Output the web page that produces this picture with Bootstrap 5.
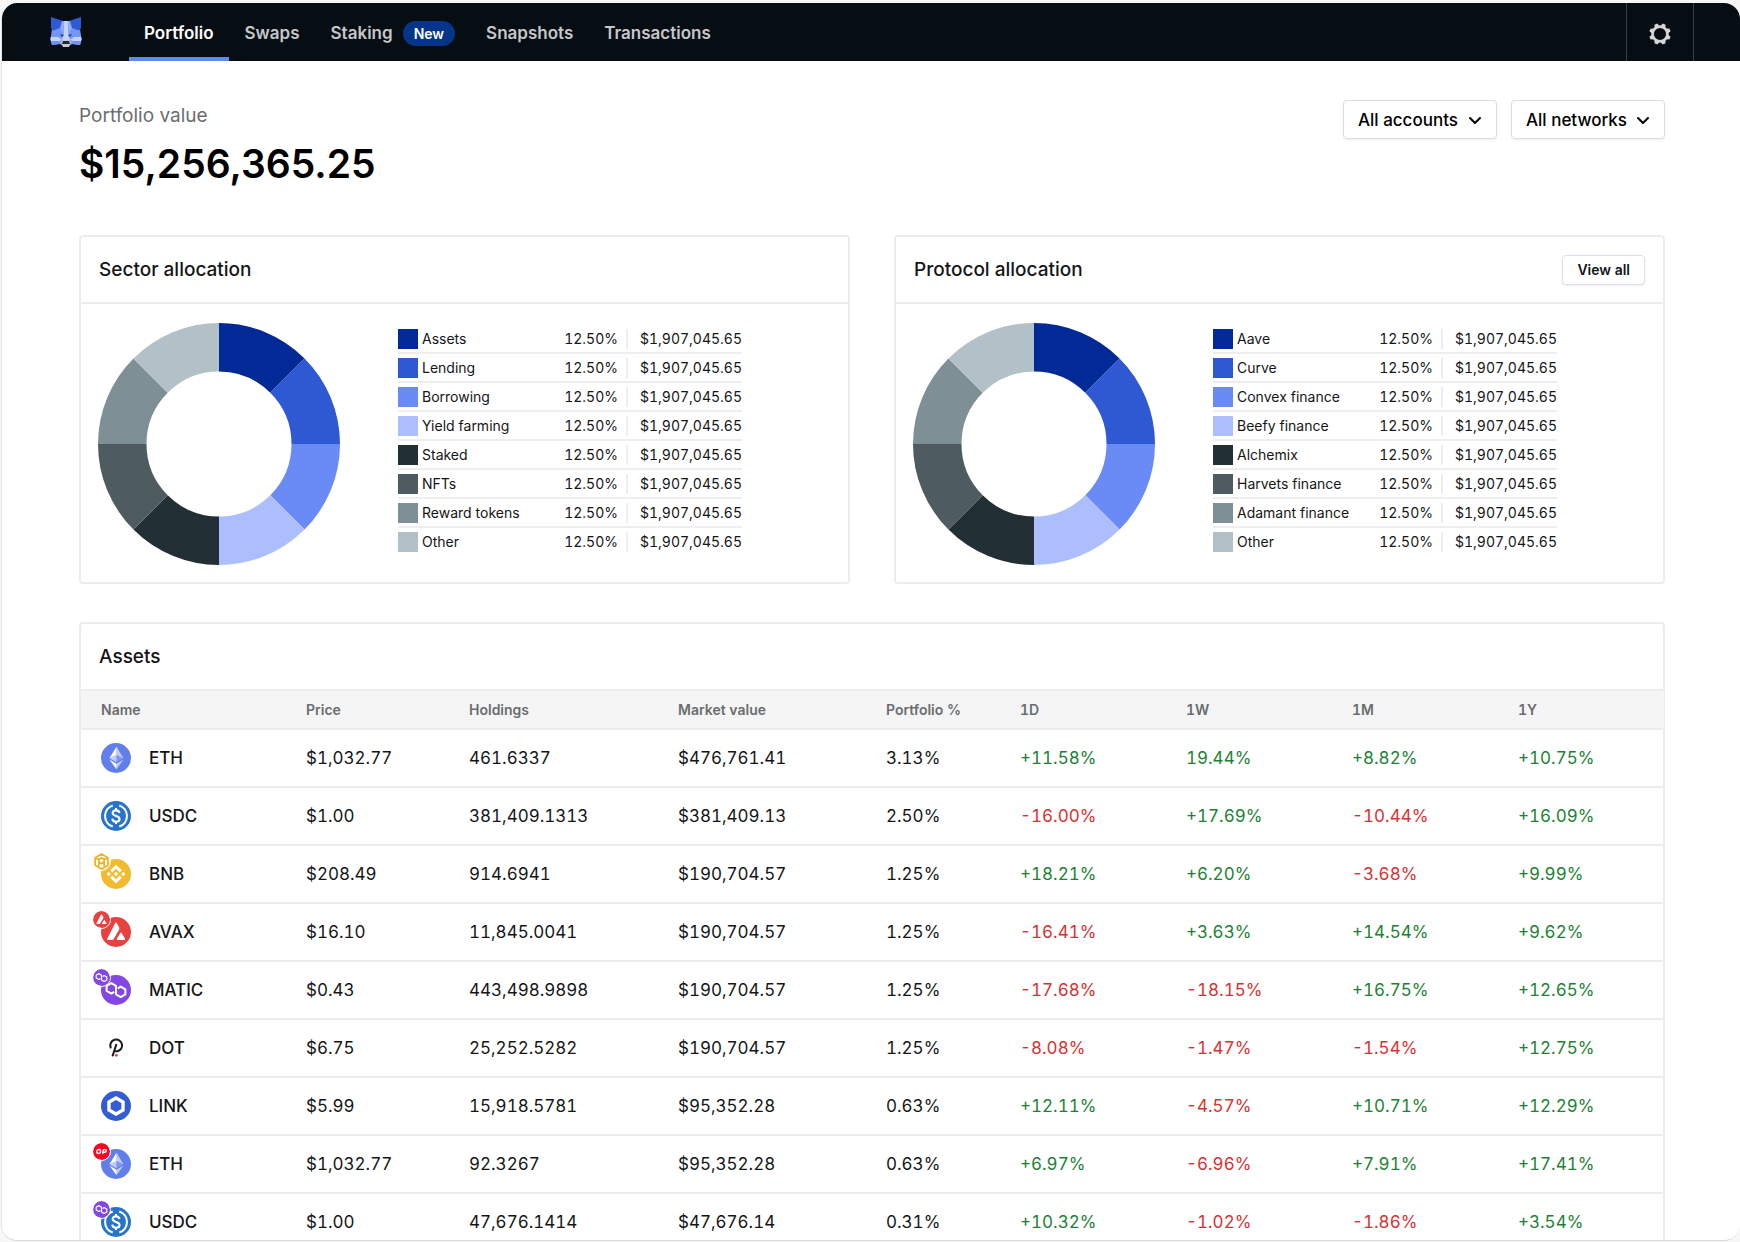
<!DOCTYPE html>
<html lang="en">
<head>
<meta charset="utf-8">
<meta name="viewport" content="width=device-width, initial-scale=1">
<title>Portfolio</title>
<link href="https://cdn.jsdelivr.net/npm/bootstrap@5.3.0/dist/css/bootstrap.min.css" rel="stylesheet">
<style>
  :root { --line: #ececec; --ink: #141618; --up: #1c8234; --down: #d73232; }
  body { font-family: Inter, "Liberation Sans", sans-serif; color: var(--ink); background: #f7f7f7; height: 100vh; padding: 3px 0 1px 1px; overflow: hidden; }
  .app-shell { height: 100%; background: #fff; border-left: 1px solid #e4e4e4; border-bottom: 1px solid #d8d8d8; border-radius: 16px; overflow-x: hidden; overflow-y: auto; scrollbar-width: none; }
  .topbar { --bs-navbar-padding-y: 0; height: 58px; background: #060d13; padding-left: 48px; }
  .topbar .topbar-links .nav-link { color: #c5c7c9; font-weight: 600; font-size: 17px; line-height: 24px; height: 58px; padding: 18px 15px 12px; border-bottom: 4px solid transparent; }
  .topbar .topbar-links .nav-link.active { color: #fff; border-bottom-color: #5a8bf5; }
  .new-pill { background: #043589; font-size: 14px; font-weight: 600; line-height: 25px; padding: 0 11px; margin-left: 10px; }
  .topbar-links { margin-left: 47px; gap: 1px; }
  .gear-btn { width: 68px; height: 58px; margin-right: 46px; border: solid #3b4045; border-width: 0 1px; border-radius: 0; color: #d6d6d6; }
  .page-body { padding: 39px 75px 0 77px; }
  .value-label { font-size: 19px; line-height: 32px; color: #6a6d70; }
  .value-total { font-size: 39px; line-height: 48px; font-weight: 600; color: #000; margin: 8px 0 0; }
  .filters { gap: 14px; }
  .filter-select { width: 154px; height: 39px; font-size: 17px; font-weight: 500; line-height: 24px; color: #000; border-color: #d9dee4; border-radius: 4px; padding: 0 30px 0 14px; background-position: right 14px center; background-size: 14px 14px; box-shadow: 0 1px 2px rgba(20,40,60,.08);
    --bs-form-select-bg-img: url("data:image/svg+xml,%3csvg xmlns='http://www.w3.org/2000/svg' viewBox='0 0 14 14'%3e%3cpath fill='none' stroke='%23000' stroke-width='2' stroke-linecap='round' stroke-linejoin='round' d='M2 5l5 5 5-5'/%3e%3c/svg%3e"); }
  .panel { --bs-card-border-color: var(--line); --bs-card-border-radius: 4px; --bs-card-inner-border-radius: 3px; border-width: 2px; color: var(--ink); }
  .panel-head { height: 67px; padding: 0 18px; border-bottom: 2px solid var(--line); }
  .panel-title { font-size: 19px; line-height: 26px; font-weight: 500; margin: 0; }
  .view-btn { font-size: 14px; font-weight: 600; line-height: 20px; padding: 4px 14px; border: 1px solid #dbe1e8; border-radius: 4px; color: var(--ink); background: #fff; box-shadow: 0 1px 2px rgba(20,40,60,.08); }
  .panel-split { --bs-gutter-x: 44px; margin-top: 47px; margin-bottom: 38px; }
  .alloc-body { padding: 19px 17px 17px; gap: 58px; }
  .donut { width: 242px; height: 242px; flex: none; }
  .legend-list { width: 344px; margin-top: 2px; font-size: 14px; line-height: 20px; }
  .legend-list li { height: 29px; padding-top: 4px; border-bottom: 2px solid #eee; }
  .legend-list li:last-child { border-bottom: 0; }
  .swatch { width: 20px; height: 20px; margin-right: 4px; }
  .leg-pct, .leg-val { font-variant-numeric: tabular-nums; }
  .leg-pct { height: 20px; padding-right: 8px; border-right: 2px solid #eee; }
  .leg-val { width: 114px; text-align: right; }
  .c1{fill:#012a96;background:#012a96}.c2{fill:#2f58d3;background:#2f58d3}.c3{fill:#6a8bf5;background:#6a8bf5}.c4{fill:#adbeff;background:#adbeff}
  .c5{fill:#223035;background:#223035}.c6{fill:#4e5c61;background:#4e5c61}.c7{fill:#7e8f95;background:#7e8f95}.c8{fill:#b1c1c7;background:#b1c1c7}
  .assets-table { table-layout: fixed; margin: 0; font-size: 17px; line-height: 24px; font-variant-numeric: tabular-nums; --bs-table-color: var(--ink); --bs-table-bg: transparent; }
  .assets-table > :not(caption) > * > * { padding: 0 0 0 20px; border-color: var(--line); border-bottom-width: 2px; vertical-align: middle; }
  .assets-table thead th { height: 38px; font-size: 14px; font-weight: 600; color: #6a6d70; background: #f5f5f5; }
  .assets-table tbody > tr > * { height: 58px; }
  .assets-table tbody th { font-weight: 500; }
  .w-name{width:205px}.w-price{width:163px}.w-hold{width:209px}.w-mkt{width:208px}.w-pct{width:134px}.w-chg{width:166px}
  .up { color: var(--up) !important; } .down { color: var(--down) !important; }
  .coin { width: 30px; height: 30px; margin-right: 18px; }
  .coin svg { display: block; }
  .coin .chain { position: absolute; left: -9px; top: -7px; border: 1px solid #fff; border-radius: 50%; box-sizing: content-box; }
</style>
<script src="https://cdn.jsdelivr.net/npm/bootstrap@5.3.0/dist/js/bootstrap.bundle.min.js"></script>
</head>
<body>
<svg width="0" height="0" class="position-absolute" aria-hidden="true">
  <symbol id="eth" viewBox="0 0 32 32"><circle cx="16" cy="16" r="16" fill="#627eea"/><path fill="#fff" fill-opacity=".6" d="M16.500 4v8.900l7.500 3.300z"/><path fill="#fff" d="M16.500 4L9 16.200l7.500-3.300z"/><path fill="#fff" fill-opacity=".6" d="M16.500 22v6L24 17.600z"/><path fill="#fff" d="M16.500 28v-6L9 17.600z"/><path fill="#fff" fill-opacity=".2" d="M16.500 20.600l7.500-4.400-7.500-3.300z"/><path fill="#fff" fill-opacity=".6" d="M9 16.200l7.500 4.400v-7.700z"/></symbol>
  <symbol id="usdc" viewBox="0 0 32 32"><circle cx="16" cy="16" r="16" fill="#2775ca"/><g fill="none" stroke="#fff" stroke-width="2.200"><path d="M12.500 4.700a11.900 11.900 0 0 0 0 22.600M19.500 4.700a11.900 11.900 0 0 1 0 22.600"/><path d="M19.700 13c-.2-2-1.600-3-3.700-3-2.200 0-3.600 1.100-3.600 2.900 0 4 7.400 2.100 7.400 6.200 0 1.900-1.500 3-3.800 3-2.300 0-3.800-1.100-4-3.200M16 7.500V10M16 22v2.500"/></g></symbol>
  <symbol id="bnb" viewBox="0 0 32 32"><circle cx="16" cy="16" r="16" fill="#f3ba2f"/><path fill="#fff" d="M12.100 14.400L16 10.500l3.900 3.900 2.300-2.300L16 6l-6.200 6.100zM6 16l2.300-2.300 2.200 2.300-2.200 2.300zm6.100 1.600L16 21.500l3.900-3.900 2.300 2.300L16 26l-6.200-6.100zM21.500 16l2.200-2.300L26 16l-2.300 2.300zm-3.200 0L16 13.700 13.700 16l2.300 2.300z"/></symbol>
  <symbol id="bsc" viewBox="0 0 32 32"><circle cx="16" cy="16" r="16" fill="#fff"/><g fill="none" stroke="#f0b323" stroke-width="3.400" stroke-linejoin="round"><path d="M16 2l12 7v14l-12 7-12-7V9z"/><path d="M5 10l6 2 5-3 5 3 6-2M11 12v5l5 3 5-3v-5M11 17v8M21 17v8"/></g></symbol>
  <symbol id="avax" viewBox="0 0 32 32"><circle cx="16" cy="16" r="16" fill="#e84142"/><path fill="#fff" d="M15.200 6.500q.8-1.200 1.600 0l2.500 4.400q.7 1.300 0 2.600l-5.600 9.600q-.8 1.400-2.400 1.400H7.500q-1.700 0-.9-1.400zM20.500 17.300q.8-1.300 1.600 0l3.600 6q.6 1.200-.8 1.200h-7.200q-1.400 0-.8-1.200z"/></symbol>
  <symbol id="matic" viewBox="0 0 32 32"><circle cx="16" cy="16" r="16" fill="#8247e5"/><path fill="none" stroke="#fff" stroke-width="2.200" stroke-linejoin="round" d="M14 18l-3 1.800-5-2.900v-5.300l5-2.900 5 2.900v9l5 2.900 5-2.900v-5.300l-5-2.900-3 1.800"/></symbol>
  <symbol id="dot" viewBox="0 0 32 32"><path fill="none" stroke="#1e1e1e" stroke-width="2.200" stroke-linecap="round" d="M10.300 15.500A6.300 6.300 0 1 1 17 19.500h-2.300M16.200 12.500L12.500 24"/><circle cx="16.300" cy="23.800" r="1.500" fill="#e6443d"/></symbol>
  <symbol id="link" viewBox="0 0 32 32"><circle cx="16" cy="16" r="16" fill="#335dd2"/><path fill="none" stroke="#fff" stroke-width="3.600" d="M16 7.500l7.500 4.300v8.400L16 24.500l-7.500-4.300v-8.400z"/></symbol>
  <symbol id="op" viewBox="0 0 32 32"><circle cx="16" cy="16" r="16" fill="#ff0420"/><g fill="none" stroke="#fff" stroke-width="2.600"><ellipse cx="11" cy="16" rx="3.600" ry="3.800" transform="skewX(-8) translate(2 0)"/><path d="M18 21l1.700-8.500h3.300c3 0 2.600 5-1 5h-3"/></g></symbol>
  <symbol id="donut" viewBox="-121 -121 242 242">
    <path class="c1" d="M0-121A121 121 0 0 1 85.560-85.560L51.270-51.270A72.500 72.500 0 0 0 0-72.500z"/>
    <path class="c2" d="M0-121A121 121 0 0 1 85.560-85.560L51.270-51.270A72.500 72.500 0 0 0 0-72.500z" transform="rotate(45)"/>
    <path class="c3" d="M0-121A121 121 0 0 1 85.560-85.560L51.270-51.270A72.500 72.500 0 0 0 0-72.500z" transform="rotate(90)"/>
    <path class="c4" d="M0-121A121 121 0 0 1 85.560-85.560L51.270-51.270A72.500 72.500 0 0 0 0-72.500z" transform="rotate(135)"/>
    <path class="c5" d="M0-121A121 121 0 0 1 85.560-85.560L51.270-51.270A72.500 72.500 0 0 0 0-72.500z" transform="rotate(180)"/>
    <path class="c6" d="M0-121A121 121 0 0 1 85.560-85.560L51.270-51.270A72.500 72.500 0 0 0 0-72.500z" transform="rotate(225)"/>
    <path class="c7" d="M0-121A121 121 0 0 1 85.560-85.560L51.270-51.270A72.500 72.500 0 0 0 0-72.500z" transform="rotate(270)"/>
    <path class="c8" d="M0-121A121 121 0 0 1 85.560-85.560L51.270-51.270A72.500 72.500 0 0 0 0-72.500z" transform="rotate(315)"/>
  </symbol>
</svg>

<div class="app-shell">
  <nav class="navbar navbar-expand topbar" aria-label="Main">
    <a href="#" class="d-flex" aria-label="Home">
      <svg width="32" height="30" viewBox="0 0 32 30">
        <path fill="#7f9ff8" d="M2 12l9-8h10l9 8 1 7 1 3-2 6-8-1-3 2h-6l-3-2-8 1-2-6 1-3z"/>
        <path fill="#3059d4" d="M1 0l12 4-2 7-7 4-3-4zM31 0L19 4l2 7 7 4 3-4z"/>
        <path fill="#7395f5" d="M2 14l8-3 3 8-3 2-8-1zM30 14l-8-3-3 8 3 2 8-1z"/>
        <path fill="#8daafb" d="M12 4h2v12l-4-5zM20 4h-2v12l4-5z"/>
        <path fill="#c3d2ff" d="M14 4h4v12l2 7h-8l2-7zM1 20h7l4 3-3 1H1zM31 20h-7l-4 3 3 1h8z"/>
        <path fill="#6f90f5" d="M1 24h8l1 3-8 1zM31 24h-8l-1 3 8 1z"/>
        <path fill="#1f3a8e" d="M10 17l4 1-2 2zM22 17l-4 1 2 2z"/>
        <path fill="#c9c9c9" d="M11 25l2-2h6l2 2-2 5h-6z"/><path fill="#24272a" d="M13 24h6l1 3h-8z"/>
      </svg>
    </a>
    <ul class="navbar-nav topbar-links">
      <li class="nav-item"><a class="nav-link active" aria-current="page" href="#">Portfolio</a></li>
      <li class="nav-item"><a class="nav-link" href="#">Swaps</a></li>
      <li class="nav-item"><a class="nav-link d-flex align-items-center" href="#">Staking<span class="badge rounded-pill new-pill">New</span></a></li>
      <li class="nav-item"><a class="nav-link" href="#">Snapshots</a></li>
      <li class="nav-item"><a class="nav-link" href="#">Transactions</a></li>
    </ul>
    <button type="button" class="btn gear-btn ms-auto p-0 pt-1 d-flex align-items-center justify-content-center" aria-label="Settings">
      <svg width="22" height="22" viewBox="-11 -11 22 22"><circle r="7.400" fill="none" stroke="currentColor" stroke-width="2.600"/><g fill="currentColor"><path id="tooth" d="M-1.600-10.800h3.200l.9 3h-5z" transform="rotate(22.500)"/><use href="#tooth" transform="rotate(45)"/><use href="#tooth" transform="rotate(90)"/><use href="#tooth" transform="rotate(135)"/><use href="#tooth" transform="rotate(180)"/><use href="#tooth" transform="rotate(225)"/><use href="#tooth" transform="rotate(270)"/><use href="#tooth" transform="rotate(315)"/></g></svg>
    </button>
  </nav>

  <main class="page-body">
    <header class="d-flex justify-content-between align-items-start">
      <div>
        <div class="value-label">Portfolio value</div>
        <h1 class="value-total">$15,256,365.25</h1>
      </div>
      <form class="d-flex filters">
        <select class="form-select filter-select" aria-label="Accounts"><option>All accounts</option></select>
        <select class="form-select filter-select" aria-label="Networks"><option>All networks</option></select>
      </form>
    </header>

    <div class="row panel-split">
      <section class="col-6">
        <div class="card panel">
          <div class="panel-head d-flex align-items-center"><h2 class="panel-title">Sector allocation</h2></div>
          <div class="alloc-body d-flex">
            <svg class="donut" role="img" aria-label="Sector allocation chart"><use href="#donut"/></svg>
            <ul class="legend-list list-unstyled mb-0">
              <li class="d-flex"><span class="swatch c1"></span><span class="me-auto">Assets</span><span class="leg-pct">12.50%</span><span class="leg-val">$1,907,045.65</span></li>
              <li class="d-flex"><span class="swatch c2"></span><span class="me-auto">Lending</span><span class="leg-pct">12.50%</span><span class="leg-val">$1,907,045.65</span></li>
              <li class="d-flex"><span class="swatch c3"></span><span class="me-auto">Borrowing</span><span class="leg-pct">12.50%</span><span class="leg-val">$1,907,045.65</span></li>
              <li class="d-flex"><span class="swatch c4"></span><span class="me-auto">Yield farming</span><span class="leg-pct">12.50%</span><span class="leg-val">$1,907,045.65</span></li>
              <li class="d-flex"><span class="swatch c5"></span><span class="me-auto">Staked</span><span class="leg-pct">12.50%</span><span class="leg-val">$1,907,045.65</span></li>
              <li class="d-flex"><span class="swatch c6"></span><span class="me-auto">NFTs</span><span class="leg-pct">12.50%</span><span class="leg-val">$1,907,045.65</span></li>
              <li class="d-flex"><span class="swatch c7"></span><span class="me-auto">Reward tokens</span><span class="leg-pct">12.50%</span><span class="leg-val">$1,907,045.65</span></li>
              <li class="d-flex"><span class="swatch c8"></span><span class="me-auto">Other</span><span class="leg-pct">12.50%</span><span class="leg-val">$1,907,045.65</span></li>
            </ul>
          </div>
        </div>
      </section>
      <section class="col-6">
        <div class="card panel">
          <div class="panel-head d-flex align-items-center justify-content-between"><h2 class="panel-title">Protocol allocation</h2><button type="button" class="btn view-btn">View all</button></div>
          <div class="alloc-body d-flex">
            <svg class="donut" role="img" aria-label="Protocol allocation chart"><use href="#donut"/></svg>
            <ul class="legend-list list-unstyled mb-0">
              <li class="d-flex"><span class="swatch c1"></span><span class="me-auto">Aave</span><span class="leg-pct">12.50%</span><span class="leg-val">$1,907,045.65</span></li>
              <li class="d-flex"><span class="swatch c2"></span><span class="me-auto">Curve</span><span class="leg-pct">12.50%</span><span class="leg-val">$1,907,045.65</span></li>
              <li class="d-flex"><span class="swatch c3"></span><span class="me-auto">Convex finance</span><span class="leg-pct">12.50%</span><span class="leg-val">$1,907,045.65</span></li>
              <li class="d-flex"><span class="swatch c4"></span><span class="me-auto">Beefy finance</span><span class="leg-pct">12.50%</span><span class="leg-val">$1,907,045.65</span></li>
              <li class="d-flex"><span class="swatch c5"></span><span class="me-auto">Alchemix</span><span class="leg-pct">12.50%</span><span class="leg-val">$1,907,045.65</span></li>
              <li class="d-flex"><span class="swatch c6"></span><span class="me-auto">Harvets finance</span><span class="leg-pct">12.50%</span><span class="leg-val">$1,907,045.65</span></li>
              <li class="d-flex"><span class="swatch c7"></span><span class="me-auto">Adamant finance</span><span class="leg-pct">12.50%</span><span class="leg-val">$1,907,045.65</span></li>
              <li class="d-flex"><span class="swatch c8"></span><span class="me-auto">Other</span><span class="leg-pct">12.50%</span><span class="leg-val">$1,907,045.65</span></li>
            </ul>
          </div>
        </div>
      </section>
    </div>

    <section class="card panel assets-panel">
      <div class="panel-head d-flex align-items-center"><h2 class="panel-title">Assets</h2></div>
      <table class="table assets-table">
        <colgroup><col class="w-name"><col class="w-price"><col class="w-hold"><col class="w-mkt"><col class="w-pct"><col class="w-chg"><col class="w-chg"><col class="w-chg"><col class="w-chg"></colgroup>
        <thead><tr><th scope="col">Name</th><th scope="col">Price</th><th scope="col">Holdings</th><th scope="col">Market value</th><th scope="col">Portfolio %</th><th scope="col">1D</th><th scope="col">1W</th><th scope="col">1M</th><th scope="col">1Y</th></tr></thead>
        <tbody>
          <tr><th scope="row"><div class="d-flex align-items-center"><span class="coin position-relative"><svg width="30" height="30"><use href="#eth"/></svg></span>ETH</div></th><td>$1,032.77</td><td>461.6337</td><td>$476,761.41</td><td>3.13%</td><td class="up">+11.58%</td><td class="up">19.44%</td><td class="up">+8.82%</td><td class="up">+10.75%</td></tr>
          <tr><th scope="row"><div class="d-flex align-items-center"><span class="coin position-relative"><svg width="30" height="30"><use href="#usdc"/></svg></span>USDC</div></th><td>$1.00</td><td>381,409.1313</td><td>$381,409.13</td><td>2.50%</td><td class="down">-16.00%</td><td class="up">+17.69%</td><td class="down">-10.44%</td><td class="up">+16.09%</td></tr>
          <tr><th scope="row"><div class="d-flex align-items-center"><span class="coin position-relative"><svg width="30" height="30"><use href="#bnb"/></svg><svg class="chain" width="17" height="17"><use href="#bsc"/></svg></span>BNB</div></th><td>$208.49</td><td>914.6941</td><td>$190,704.57</td><td>1.25%</td><td class="up">+18.21%</td><td class="up">+6.20%</td><td class="down">-3.68%</td><td class="up">+9.99%</td></tr>
          <tr><th scope="row"><div class="d-flex align-items-center"><span class="coin position-relative"><svg width="30" height="30"><use href="#avax"/></svg><svg class="chain" width="17" height="17"><use href="#avax"/></svg></span>AVAX</div></th><td>$16.10</td><td>11,845.0041</td><td>$190,704.57</td><td>1.25%</td><td class="down">-16.41%</td><td class="up">+3.63%</td><td class="up">+14.54%</td><td class="up">+9.62%</td></tr>
          <tr><th scope="row"><div class="d-flex align-items-center"><span class="coin position-relative"><svg width="30" height="30"><use href="#matic"/></svg><svg class="chain" width="17" height="17"><use href="#matic"/></svg></span>MATIC</div></th><td>$0.43</td><td>443,498.9898</td><td>$190,704.57</td><td>1.25%</td><td class="down">-17.68%</td><td class="down">-18.15%</td><td class="up">+16.75%</td><td class="up">+12.65%</td></tr>
          <tr><th scope="row"><div class="d-flex align-items-center"><span class="coin position-relative"><svg width="30" height="30"><use href="#dot"/></svg></span>DOT</div></th><td>$6.75</td><td>25,252.5282</td><td>$190,704.57</td><td>1.25%</td><td class="down">-8.08%</td><td class="down">-1.47%</td><td class="down">-1.54%</td><td class="up">+12.75%</td></tr>
          <tr><th scope="row"><div class="d-flex align-items-center"><span class="coin position-relative"><svg width="30" height="30"><use href="#link"/></svg></span>LINK</div></th><td>$5.99</td><td>15,918.5781</td><td>$95,352.28</td><td>0.63%</td><td class="up">+12.11%</td><td class="down">-4.57%</td><td class="up">+10.71%</td><td class="up">+12.29%</td></tr>
          <tr><th scope="row"><div class="d-flex align-items-center"><span class="coin position-relative"><svg width="30" height="30"><use href="#eth"/></svg><svg class="chain" width="17" height="17"><use href="#op"/></svg></span>ETH</div></th><td>$1,032.77</td><td>92.3267</td><td>$95,352.28</td><td>0.63%</td><td class="up">+6.97%</td><td class="down">-6.96%</td><td class="up">+7.91%</td><td class="up">+17.41%</td></tr>
          <tr><th scope="row"><div class="d-flex align-items-center"><span class="coin position-relative"><svg width="30" height="30"><use href="#usdc"/></svg><svg class="chain" width="17" height="17"><use href="#matic"/></svg></span>USDC</div></th><td>$1.00</td><td>47,676.1414</td><td>$47,676.14</td><td>0.31%</td><td class="up">+10.32%</td><td class="down">-1.02%</td><td class="down">-1.86%</td><td class="up">+3.54%</td></tr>
        </tbody>
      </table>
    </section>
  </main>
</div>
</body>
</html>
